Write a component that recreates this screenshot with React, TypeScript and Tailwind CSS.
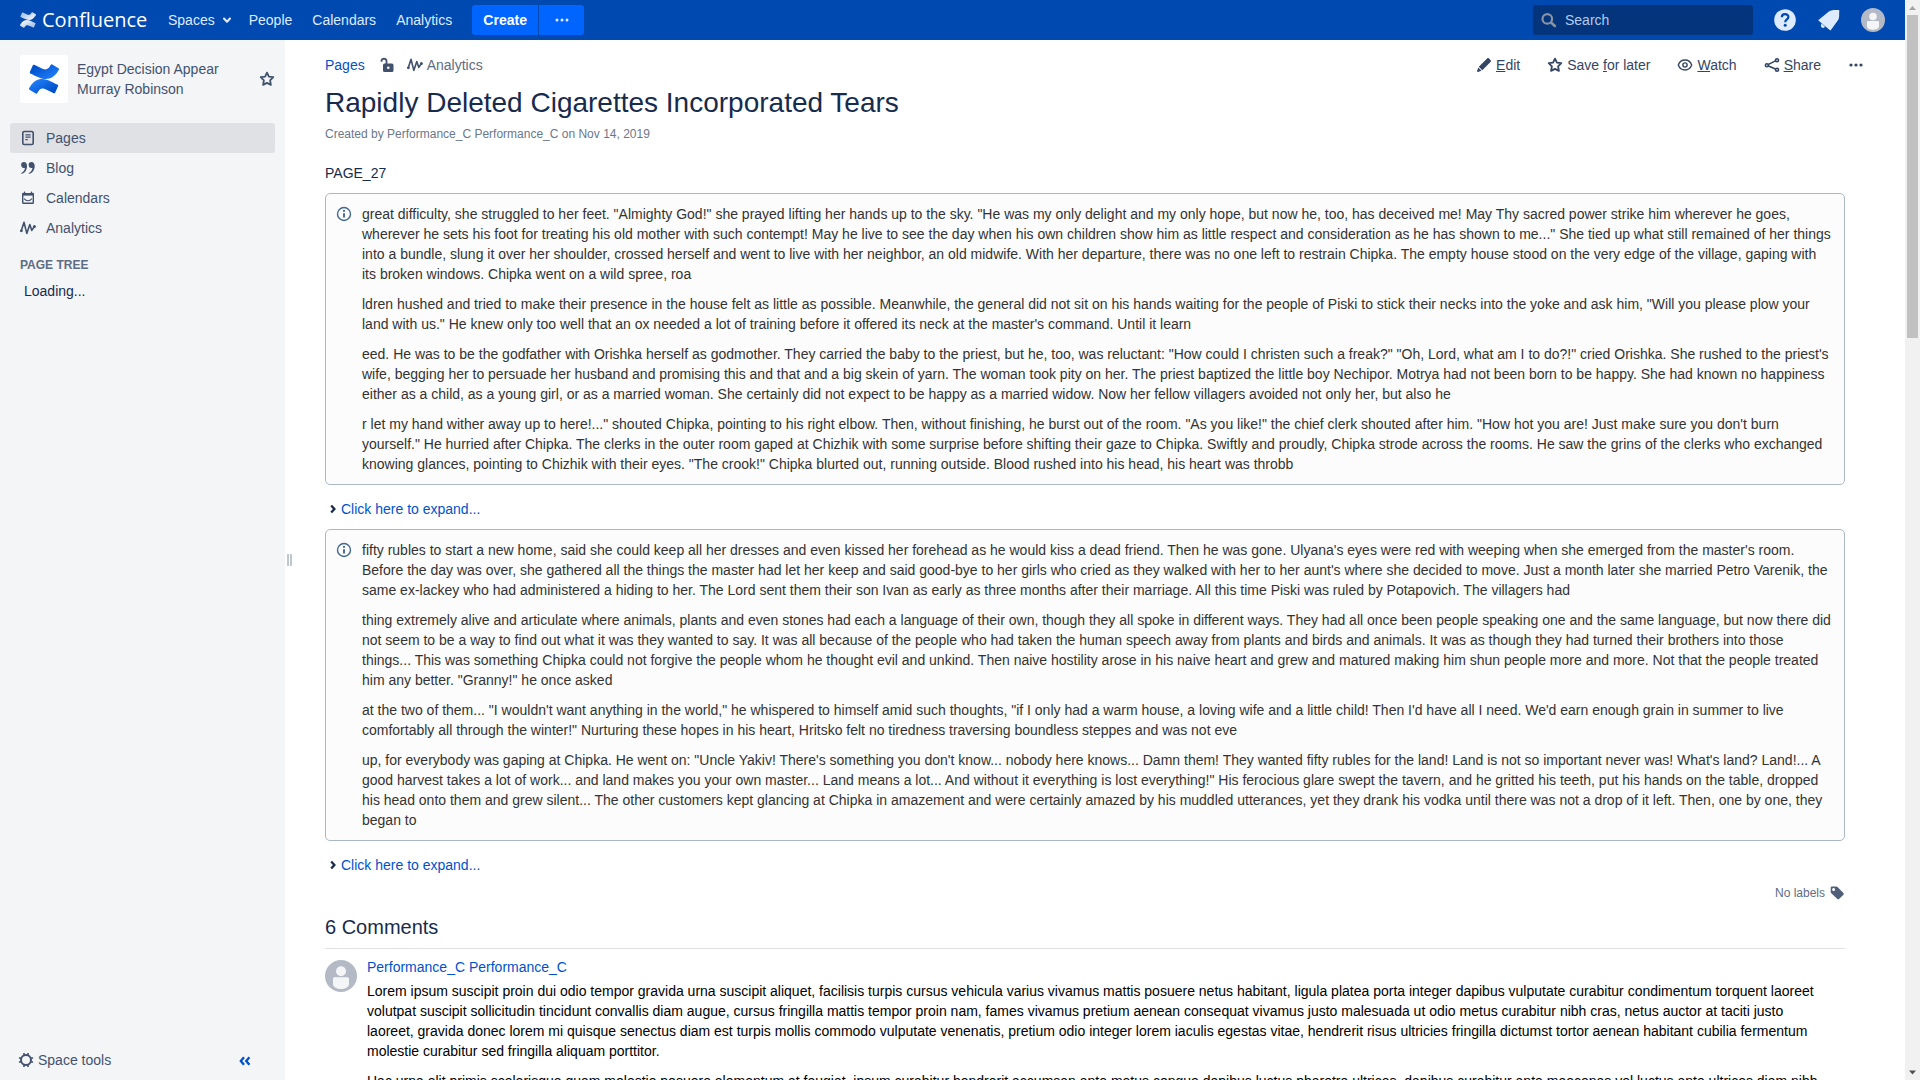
import type { ReactNode } from "react";

const firstPanel = [
  `great difficulty, she struggled to her feet. "Almighty God!" she prayed lifting her hands up to the sky. "He was my only delight and my only hope, but now he, too, has deceived me! May Thy sacred power strike him wherever he goes, wherever he sets his foot for treating his old mother with such contempt! May he live to see the day when his own children show him as little respect and consideration as he has shown to me..." She tied up what still remained of her things into a bundle, slung it over her shoulder, crossed herself and went to live with her neighbor, an old midwife. With her departure, there was no one left to restrain Chipka. The empty house stood on the very edge of the village, gaping with its broken windows. Chipka went on a wild spree, roa`,
  `ldren hushed and tried to make their presence in the house felt as little as possible. Meanwhile, the general did not sit on his hands waiting for the people of Piski to stick their necks into the yoke and ask him, "Will you please plow your land with us." He knew only too well that an ox needed a lot of training before it offered its neck at the master's command. Until it learn`,
  `eed. He was to be the godfather with Orishka herself as godmother. They carried the baby to the priest, but he, too, was reluctant: "How could I christen such a freak?" "Oh, Lord, what am I to do?!" cried Orishka. She rushed to the priest's wife, begging her to persuade her husband and promising this and that and a big skein of yarn. The woman took pity on her. The priest baptized the little boy Nechipor. Motrya had not been born to be happy. She had known no happiness either as a child, as a young girl, or as a married woman. She certainly did not expect to be happy as a married widow. Now her fellow villagers avoided not only her, but also he`,
  `r let my hand wither away up to here!..." shouted Chipka, pointing to his right elbow. Then, without finishing, he burst out of the room. "As you like!" the chief clerk shouted after him. "How hot you are! Just make sure you don't burn yourself." He hurried after Chipka. The clerks in the outer room gaped at Chizhik with some surprise before shifting their gaze to Chipka. Swiftly and proudly, Chipka strode across the rooms. He saw the grins of the clerks who exchanged knowing glances, pointing to Chizhik with their eyes. "The crook!" Chipka blurted out, running outside. Blood rushed into his head, his heart was throbb`,
];

const secondPanel = [
  `fifty rubles to start a new home, said she could keep all her dresses and even kissed her forehead as he would kiss a dead friend. Then he was gone. Ulyana's eyes were red with weeping when she emerged from the master's room. Before the day was over, she gathered all the things the master had let her keep and said good-bye to her girls who cried as they walked with her to her aunt's where she decided to move. Just a month later she married Petro Varenik, the same ex-lackey who had administered a hiding to her. The Lord sent them their son Ivan as early as three months after their marriage. All this time Piski was ruled by Potapovich. The villagers had`,
  `thing extremely alive and articulate where animals, plants and even stones had each a language of their own, though they all spoke in different ways. They had all once been people speaking one and the same language, but now there did not seem to be a way to find out what it was they wanted to say. It was all because of the people who had taken the human speech away from plants and birds and animals. It was as though they had turned their brothers into those things... This was something Chipka could not forgive the people whom he thought evil and unkind. Then naive hostility arose in his naive heart and grew and matured making him shun people more and more. Not that the people treated him any better. "Granny!" he once asked`,
  `at the two of them... "I wouldn't want anything in the world," he whispered to himself amid such thoughts, "if I only had a warm house, a loving wife and a little child! Then I'd have all I need. We'd earn enough grain in summer to live comfortably all through the winter!" Nurturing these hopes in his heart, Hritsko felt no tiredness traversing boundless steppes and was not eve`,
  `up, for everybody was gaping at Chipka. He went on: "Uncle Yakiv! There's something you don't know... nobody here knows... Damn them! They wanted fifty rubles for the land! Land is not so important never was! What's land? Land!... A good harvest takes a lot of work... and land makes you your own master... Land means a lot... And without it everything is lost everything!" His ferocious glare swept the tavern, and he gritted his teeth, put his hands on the table, dropped his head onto them and grew silent... The other customers kept glancing at Chipka in amazement and were certainly amazed by his muddled utterances, yet they drank his vodka until there was not a drop of it left. Then, one by one, they began to`,
];

const comment = [
  "Lorem ipsum suscipit proin dui odio tempor gravida urna suscipit aliquet, facilisis turpis cursus vehicula varius vivamus mattis posuere netus habitant, ligula platea porta integer dapibus vulputate curabitur condimentum torquent laoreet volutpat suscipit sollicitudin tincidunt convallis diam augue, cursus fringilla mattis tempor proin nam, fames vivamus pretium aenean consequat vivamus justo malesuada ut odio metus curabitur nibh cras, netus auctor at taciti justo laoreet, gravida donec lorem mi quisque senectus diam est turpis mollis commodo vulputate venenatis, pretium odio integer lorem iaculis egestas vitae, hendrerit risus ultricies fringilla dictumst tortor aenean habitant cubilia fermentum molestie curabitur sed fringilla aliquam porttitor.",
  "Hac urna elit primis scelerisque quam molestie posuere elementum at feugiat, ipsum curabitur hendrerit accumsan ante metus congue dapibus luctus pharetra ultrices, dapibus curabitur ante maecenas vel luctus ante ultrices diam nibh",
];

function Icon({ children, className = "size-4" }: { children: ReactNode; className?: string }) {
  return (
    <svg viewBox="0 0 16 16" fill="none" stroke="currentColor" strokeWidth="1.6" strokeLinejoin="round" strokeLinecap="round" aria-hidden="true" className={"shrink-0 " + className}>
      {children}
    </svg>
  );
}

const StarIcon = () => (
  <Icon>
    <path d="M8 1.600 9.900 5.600 14.300 6.200 11.100 9.300 11.900 13.900 8 11.900 4.100 13.900 4.900 9.300 1.700 6.200 6.100 5.600Z" strokeWidth="1.800" />
  </Icon>
);

const AnalyticsIcon = () => (
  <Icon>
    <path d="M1.200 11 4 2.200 6.800 13.400 9.800 4.600 11.800 10.400 14.200 6.800" strokeWidth="1.600" />
    <circle cx="1.400" cy="10.800" r=".6" fill="currentColor" />
    <circle cx="14.400" cy="6.400" r=".7" fill="currentColor" />
  </Icon>
);

const DotsIcon = () => (
  <Icon>
    <g fill="currentColor" stroke="none">
      <circle cx="3" cy="8" r="1.600" />
      <circle cx="8" cy="8" r="1.600" />
      <circle cx="13" cy="8" r="1.600" />
    </g>
  </Icon>
);

const PageIcon = () => (
  <Icon>
    <rect x="2.800" y="1.500" width="10.400" height="13" rx="1.400" />
    <path d="M5.400 4.800h5.200M5.400 7.200h5.200M5.400 9.600h2.400" strokeWidth="1.200" strokeLinecap="butt" />
  </Icon>
);

const QuoteIcon = () => (
  <Icon>
    <g fill="currentColor" stroke="none">
      <path d="M4 2a3 3 0 1 0 .9 5.900C4.700 10.300 3.200 12 1.300 13v1C5 13.200 7 10 7 6 7 3.600 5.800 2 4 2Z" />
      <path d="M11.500 2a3 3 0 1 0 .9 5.900c-.2 2.400-1.700 4.100-3.600 5.100v1c3.700-.8 5.900-4 5.900-8 0-2.400-1.400-4-3.200-4Z" />
    </g>
  </Icon>
);

const CalendarIcon = () => (
  <Icon>
    <rect x="2.700" y="4" width="10.600" height="9.300" rx=".6" strokeWidth="1.400" />
    <path d="M2.200 3h11.600v2.600H2.200Z" fill="currentColor" stroke="none" />
    <path d="M4.500 2.400v1M11.500 2.400v1" />
    <path d="M4.500 9c1.400 2.300 5.600 2.300 7 0" strokeWidth="1.200" />
  </Icon>
);

const ChevronDown = () => (
  <Icon className="size-3">
    <path d="m4 6 4 4.300L12 6" strokeWidth="2.800" />
  </Icon>
);

const ChevronRight = () => (
  <Icon className="size-4 text-[#172b4d]">
    <path d="M6.200 4.500 9.400 8l-3.200 3.500" strokeWidth="2.300" strokeLinecap="butt" strokeLinejoin="miter" />
  </Icon>
);

const InfoIcon = () => (
  <Icon className="size-4 text-[#42678f]">
    <circle cx="8" cy="8" r="6.500" strokeWidth="1.400" />
    <path d="M8 7.200v4.300" strokeWidth="1.900" strokeLinecap="butt" />
    <circle cx="8" cy="4.900" r="1.100" fill="currentColor" stroke="none" />
  </Icon>
);

function Avatar({ className }: { className: string }) {
  return (
    <svg viewBox="0 0 32 32" className={"shrink-0 " + className} role="img" aria-label="User avatar">
      <circle cx="16" cy="16" r="16" fill="#b3bac5" />
      <circle cx="16" cy="11.300" r="5" fill="#f4f5f7" />
      <path d="M8 18.800c0-1 .6-1.600 1.600-1.600h12.800c1 0 1.600.6 1.600 1.600v5.400c0 3-4 4.800-8 4.800s-8-1.800-8-4.800Z" fill="#f4f5f7" />
    </svg>
  );
}

function ConfluenceMark({ id, from, to, className }: { id: string; from: string; to: string; className: string }) {
  return (
    <svg viewBox="0 0 32 32" className={"shrink-0 " + className} aria-hidden="true">
      <defs>
        <linearGradient id={id + "-a"} x1="1" y1=".9" x2=".2" y2=".2">
          <stop offset="0" stopColor={from} />
          <stop offset="1" stopColor={to} />
        </linearGradient>
        <linearGradient id={id + "-b"} x1="0" y1=".1" x2=".8" y2=".8">
          <stop offset="0" stopColor={from} />
          <stop offset="1" stopColor={to} />
        </linearGradient>
      </defs>
      <path fill={"url(#" + id + "-b)"} d="M1.100 24.300c-.3.500-.7 1.100-1 1.600-.3.500-.1 1.200.4 1.500l6.700 4.100c.5.300 1.200.2 1.500-.4.300-.4.600-1 1-1.600 2.600-4.300 5.300-3.800 10.100-1.500l6.600 3.100c.6.300 1.200 0 1.500-.5l3.200-7.200c.2-.5 0-1.200-.5-1.400-1.400-.7-4.200-2-6.700-3.200C14.900 14.400 7.100 14.700 1.100 24.300Z" />
      <path fill={"url(#" + id + "-a)"} d="M30.900 7.700c.3-.5.700-1.100 1-1.600.3-.5.100-1.200-.4-1.500L24.800.5c-.5-.3-1.200-.2-1.500.4-.3.400-.6 1-1 1.600-2.600 4.300-5.300 3.800-10.100 1.500L5.600.9C5 .6 4.400.9 4.100 1.400L.9 8.600c-.2.500 0 1.200.5 1.400 1.400.7 4.200 2 6.700 3.200 9 4.400 16.800 4.100 22.800-5.500Z" />
    </svg>
  );
}

function Header() {
  return (
    <header className="flex h-10 shrink-0 items-center bg-[#0049b0] pl-5 pr-5 text-[#deebff]">
      <a href="#home" className="flex w-32 items-center gap-1.5 text-white">
        <ConfluenceMark id="brand" from="#ffffff" to="#a9c4ea" className="size-4" />
        <span className="font-['Open_Sans',sans-serif] text-[20px] leading-6">Confluence</span>
      </a>
      <nav aria-label="Main" className="ml-5 flex items-center">
        <button type="button" className="flex items-center gap-1.5">
          Spaces <ChevronDown />
        </button>
        <a href="#people" className="ml-4">People</a>
        <a href="#calendars" className="ml-5">Calendars</a>
        <a href="#analytics" className="ml-5">Analytics</a>
      </nav>
      <div className="ml-5 flex gap-px">
        <button type="button" className="h-[30px] w-[66px] rounded-l-[3px] bg-[#0065ff] font-bold text-white">Create</button>
        <button type="button" aria-label="Create from template" className="flex h-[30px] w-[45px] items-center justify-center rounded-r-[3px] bg-[#0065ff]">
          <svg viewBox="0 0 16 16" className="size-4" fill="currentColor" aria-hidden="true">
            <circle cx="3" cy="8" r="1.500" />
            <circle cx="8" cy="8" r="1.500" />
            <circle cx="13" cy="8" r="1.500" />
          </svg>
        </button>
      </div>
      <label className="ml-auto flex h-[30px] w-[220px] items-center gap-2 rounded-[3px] bg-[#04347c] px-2">
        <Icon className="size-4 text-[#8993a4]">
          <circle cx="6.300" cy="6.900" r="4.800" strokeWidth="2.200" />
          <path d="m10.300 10.800 3.600 3.200" strokeWidth="2.600" />
        </Icon>
        <input type="search" placeholder="Search" aria-label="Search" className="min-w-0 flex-1 bg-transparent outline-none placeholder:text-[#b3cbed]" />
      </label>
      <button type="button" aria-label="Help" className="ml-5">
        <svg viewBox="0 0 24 24" className="size-6" aria-hidden="true">
          <circle cx="12" cy="12" r="10.800" fill="#deebff" />
          <path d="M8.800 9.300c0-4.300 6.600-4.200 6.600-.3 0 2.400-3.200 2.500-3.200 5.200" fill="none" stroke="#0049b0" strokeWidth="2.200" />
          <circle cx="12.200" cy="17.300" r="1.500" fill="#0049b0" />
        </svg>
      </button>
      <button type="button" aria-label="Notifications" className="ml-5">
        <svg viewBox="0 0 24 24" className="size-6" fill="#deebff" aria-hidden="true">
          <path d="M1.800 11.700 12.200 3.300C14.700 1.800 18.500 1.900 21.600 2.100c.7.100.8.500.7 1.100-.4 3.500.6 6.500-1.700 9.600l-6.700 9.300c-.4.500-.8.400-1.200 0L2 13c-.6-.5-.6-.9-.2-1.300Z" />
          <path d="M4.600 15.400 8 18.800c-.8 1.500-2.700 1.400-3.500.4-.8-1.100-.8-2.600.1-3.800Z" />
        </svg>
      </button>
      <button type="button" aria-label="Account" className="ml-5">
        <Avatar className="size-6" />
      </button>
    </header>
  );
}

const links = [
  { label: "Pages", icon: <PageIcon />, tone: "bg-[#dfe1e5]" },
  { label: "Blog", icon: <QuoteIcon />, tone: "" },
  { label: "Calendars", icon: <CalendarIcon />, tone: "" },
  { label: "Analytics", icon: <AnalyticsIcon />, tone: "" },
];

function Sidebar() {
  return (
    <aside className="flex w-[285px] shrink-0 flex-col bg-[#f4f5f7] text-[#42526e]">
      <div className="flex items-center pl-5 pr-2.5 pt-[15px]">
        <span className="flex size-12 shrink-0 items-center justify-center rounded-[3px] bg-white">
          <ConfluenceMark id="space" from="#2684ff" to="#0052cc" className="size-[30px]" />
        </span>
        <a href="#space" className="ml-[9px] w-40">Egypt Decision Appear Murray Robinson</a>
        <button type="button" aria-label="Favourite space" className="ml-auto">
          <StarIcon />
        </button>
      </div>
      <nav aria-label="Space" className="mt-5 flex flex-col px-2.5">
        {links.map((l) => (
          <a key={l.label} href={"#" + l.label} className={"flex h-[30px] items-center gap-2.5 rounded-[3px] px-2.5 " + l.tone}>
            {l.icon}
            {l.label}
          </a>
        ))}
      </nav>
      <h2 className="mt-3 px-5 text-xs leading-5 font-bold text-[#5e6c84]">PAGE TREE</h2>
      <p className="mt-1.5 px-6 text-[#172b4d]">Loading...</p>
      <div className="mt-auto flex items-center justify-between pb-2.5 pl-[18px] pr-8">
        <button type="button" className="flex items-center gap-1">
          <Icon>
            <circle cx="8" cy="8" r="5" strokeWidth="2" />
            <path
              d="M6 .9v2M10 .9v2M6 13.100v2M10 13.100v2M.9 6h2M.9 10h2M13.100 6h2M13.100 10h2"
              strokeWidth="1.600"
              strokeLinecap="butt"
            />
          </Icon>
          Space tools
        </button>
        <button type="button" aria-label="Collapse sidebar" className="text-[#0052cc]">
          <Icon>
            <path d="M7 5.200 3.800 9 7 12.800M12.400 5.200 9.200 9l3.200 3.800" strokeWidth="2.300" strokeLinecap="butt" strokeLinejoin="miter" />
          </Icon>
        </button>
      </div>
    </aside>
  );
}

function InfoPanel({ paragraphs }: { paragraphs: string[] }) {
  return (
    <section className="flex gap-2.5 rounded-[5px] border border-[#aab8c6] bg-[#fcfcfc] p-2.5 text-[#333333]">
      <div className="flex h-5 items-center">
        <InfoIcon />
      </div>
      <div className="flex flex-1 flex-col gap-2.5">
        {paragraphs.map((p) => (
          <p key={p.slice(0, 20)}>{p}</p>
        ))}
      </div>
    </section>
  );
}

function Expander() {
  return (
    <button type="button" className="mt-3.5 mb-2.5 flex items-center text-[#0052cc]">
      <ChevronRight />
      Click here to expand...
    </button>
  );
}

function PageActions() {
  return (
    <div className="flex items-center gap-[27px] text-[#344563]">
      <a href="#edit" className="flex items-center gap-1">
        <Icon>
          <g fill="currentColor" stroke="none">
            <path d="m9.400 3.200 1.700-1.700c.6-.6 1.300-.6 1.900 0l1.500 1.500c.6.600.6 1.300 0 1.900l-8.200 8.300-3.500-3.500Z" />
            <path d="m2.300 10.500 3.200 3.200-3.600 1.200c-.6.200-1-.2-.8-.8Z" />
          </g>
        </Icon>
        <span><u>E</u>dit</span>
      </a>
      <button type="button" className="flex items-center gap-1">
        <StarIcon />
        <span>Save <u>f</u>or later</span>
      </button>
      <button type="button" className="flex items-center gap-1">
        <Icon>
          <path d="M1.300 8c2.500-6.600 10.900-6.600 13.400 0-2.500 6.600-10.900 6.600-13.400 0Z" strokeWidth="1.400" />
          <circle cx="8" cy="8" r="2.100" strokeWidth="1.400" />
        </Icon>
        <span><u>W</u>atch</span>
      </button>
      <button type="button" className="flex items-center gap-1">
        <Icon>
          <circle cx="2.900" cy="8.200" r="1.500" />
          <circle cx="13" cy="3.200" r="1.500" />
          <circle cx="13" cy="12.800" r="1.500" />
          <path d="m4.500 7.400 7-3.500M4.500 9l7 3.100" />
        </Icon>
        <span><u>S</u>hare</span>
      </button>
      <button type="button" aria-label="More actions">
        <DotsIcon />
      </button>
    </div>
  );
}

function Content() {
  return (
    <main className="flex min-w-0 flex-1 flex-col bg-white pt-[15px] text-[#172b4d]">
      <div className="flex items-center justify-between pl-[30px] pr-[41px]">
        <nav aria-label="Breadcrumb" className="flex items-center">
          <a href="#pages" className="text-[#0052cc]">Pages</a>
          <button type="button" aria-label="Unrestricted" className="ml-3.5 text-[#42526e]">
            <Icon>
              <rect x="4" y="6.500" width="10.500" height="8.500" rx="1.500" fill="currentColor" stroke="none" />
              <path d="M7.500 7V4c0-3-5-3-5 0v.8" strokeWidth="1.800" strokeLinecap="butt" />
              <circle cx="9.300" cy="10.800" r="1.300" fill="#ffffff" stroke="none" />
            </Icon>
          </button>
          <a href="#page-analytics" className="ml-3 flex items-center gap-1 text-[#5e6c84]">
            <span className="text-[#42526e]"><AnalyticsIcon /></span>
            Analytics
          </a>
        </nav>
        <PageActions />
      </div>
      <div className="flex flex-col items-stretch pl-[30px] pr-[60px]">
        <h1 className="mt-3 text-[28px] leading-8">Rapidly Deleted Cigarettes Incorporated Tears</h1>
        <p className="mt-[5px] text-xs leading-5 text-[#6b778c]">Created by Performance_C Performance_C on Nov 14, 2019</p>
        <p className="mt-[19px] mb-2.5">PAGE_27</p>
        <InfoPanel paragraphs={firstPanel} />
        <Expander />
        <InfoPanel paragraphs={secondPanel} />
        <Expander />
        <div className="-mt-0.5 flex items-center justify-end gap-1 text-xs leading-5 text-[#5e6c84]">
          No labels
          <button type="button" aria-label="Edit labels" className="text-[#505f79]">
            <Icon>
              <path
                fillRule="evenodd"
                d="M1.700 2.900c0-.8.500-1.300 1.300-1.300h4.200c.5 0 .9.200 1.300.5l5.700 5.600c.7.700.7 1.500 0 2.200l-3.900 3.900c-.7.700-1.500.7-2.200 0L2.300 8.300c-.4-.4-.6-.8-.6-1.300Zm2.900.1a1.500 1.500 0 1 0 0 3 1.500 1.500 0 0 0 0-3Z"
                fill="currentColor"
                stroke="none"
              />
            </Icon>
          </button>
        </div>
        <h2 className="mt-3 border-b border-[#dfe1e6] pb-2 text-xl leading-[25px]">6 Comments</h2>
        <article className="mt-2 flex gap-2.5">
          <Avatar className="mt-[3px] size-8" />
          <div className="flex flex-1 flex-col pr-4 text-black">
            <a href="#author" className="mb-1 text-[#0052cc]">Performance_C Performance_C</a>
            {comment.map((p) => (
              <p key={p.slice(0, 20)} className="mb-2.5">{p}</p>
            ))}
          </div>
        </article>
      </div>
    </main>
  );
}

export default function App() {
  return (
    <div className="flex h-screen overflow-hidden font-['Liberation_Sans',Arial,sans-serif] text-sm leading-5">
      <div className="flex min-w-0 flex-1 flex-col">
        <Header />
        <div className="flex min-h-0 flex-1">
          <Sidebar />
          <div aria-hidden="true" className="flex w-2.5 shrink-0 items-center gap-px pl-0.5">
            <span className="h-3 w-0.5 bg-[#c1c7d0]" />
            <span className="h-3 w-0.5 bg-[#c1c7d0]" />
          </div>
          <Content />
        </div>
      </div>
      <div aria-hidden="true" className="flex w-[15px] shrink-0 flex-col items-center bg-[#f1f1f1]">
        <svg viewBox="0 0 15 15" className="size-[15px]"><path d="M4 10 7.500 6 11 10Z" fill="#a3a3a3" /></svg>
        <span className="h-[323px] w-[11px] bg-[#c1c1c1]" />
        <svg viewBox="0 0 15 15" className="mt-auto size-[15px]"><path d="M4 5.500h7L7.500 9.500Z" fill="#505050" /></svg>
      </div>
    </div>
  );
}
